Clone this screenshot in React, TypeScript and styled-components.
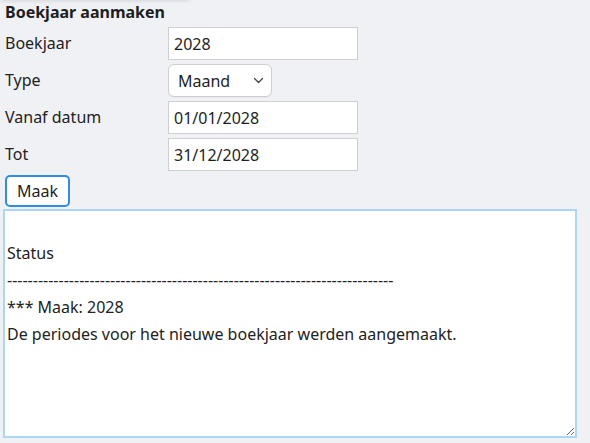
import React from "react";
import styled, { createGlobalStyle } from "styled-components";

const Global = createGlobalStyle`
  html, body { margin: 0; padding: 0; background: #f0f1f5; }
  body { font-family: "Noto Sans", "Open Sans", sans-serif; color: #222; }
`;

const Page = styled.div`
  display: flex;
  flex-direction: column;
  padding: 0 0 0 3px;
  width: 577px;
  position: relative;
`;

const TopShade = styled.div`
  position: absolute;
  left: 0;
  top: -10px;
  width: 190px;
  height: 10px;
  box-shadow: 0 1px 4px rgba(0, 0, 0, 0.12);
  border-radius: 4px;
`;

const Heading = styled.h3`
  margin: 1px 0 0 2px;
  font-size: 16px;
  line-height: 22px;
  font-weight: 700;
  color: #1e1e1e;
`;

const Form = styled.div`
  display: grid;
  grid-template-columns: 163px auto;
  row-gap: 4px;
  margin: 4px 0 0 2px;
  align-items: center;
`;

const Label = styled.label`
  font-size: 16px;
  line-height: 33px;
  color: #222;
`;

const Input = styled.input<{ $w?: number }>`
  box-sizing: border-box;
  width: ${(p) => p.$w ?? 190}px;
  height: 33px;
  border: 1px solid #cfcfd2;
  background: #fff;
  padding: 0 5px;
  font-family: "Noto Sans", sans-serif;
  font-size: 16px;
  color: #1e1e1e;
  outline: none;
`;

const SelectWrap = styled.div`
  position: relative;
  width: 104px;
  height: 33px;
`;

const Select = styled.select`
  appearance: none;
  box-sizing: border-box;
  width: 104px;
  height: 33px;
  border: 1px solid #cfcfd2;
  border-radius: 6px;
  background: #fff;
  padding: 0 0 0 9px;
  font-family: "Noto Sans", sans-serif;
  font-size: 16px;
  color: #1e1e1e;
  box-shadow: 0 1px 1px rgba(0, 0, 0, 0.04);
`;

const Chevron = styled.svg`
  position: absolute;
  right: 8px;
  top: 13px;
  pointer-events: none;
`;

const Button = styled.button`
  box-sizing: border-box;
  margin: 4px 0 0 2px;
  width: 65px;
  height: 32px;
  border: 2px solid #2e8de6;
  border-radius: 5px;
  background: #fff;
  font-family: "Noto Sans", sans-serif;
  font-size: 16px;
  color: #1e1e1e;
  padding: 0;
`;

const Output = styled.textarea`
  box-sizing: border-box;
  margin-top: 2px;
  width: 574px;
  height: 229px;
  border: 2px solid #abd6f8;
  background: #fff;
  padding: 2px 2px;
  font-family: "Noto Sans", sans-serif;
  font-size: 16px;
  line-height: 27px;
  color: #222;
  outline: none;
  resize: both;
`;

const dashes = "-".repeat(75);
const text = `\nStatus\n${dashes}\n*** Maak: 2028\nDe periodes voor het nieuwe boekjaar werden aangemaakt.`;

export default function App() {
  return (
    <Page>
      <Global />
      <TopShade />
      <Heading>Boekjaar aanmaken</Heading>
      <Form>
        <Label>Boekjaar</Label>
        <Input defaultValue="2028" />
        <Label>Type</Label>
        <SelectWrap>
          <Select defaultValue="Maand">
            <option>Maand</option>
            <option>Kwartaal</option>
            <option>Jaar</option>
          </Select>
          <Chevron width="11" height="7" viewBox="0 0 11 7">
            <path d="M1.5 1.5 L5.5 5.5 L9.5 1.5" fill="none" stroke="#444" strokeWidth="1.3" strokeLinecap="round" strokeLinejoin="round" />
          </Chevron>
        </SelectWrap>
        <Label>Vanaf datum</Label>
        <Input defaultValue="01/01/2028" />
        <Label>Tot</Label>
        <Input defaultValue="31/12/2028" />
      </Form>
      <div>
        <Button>Maak</Button>
      </div>
      <Output readOnly value={text} />
    </Page>
  );
}
